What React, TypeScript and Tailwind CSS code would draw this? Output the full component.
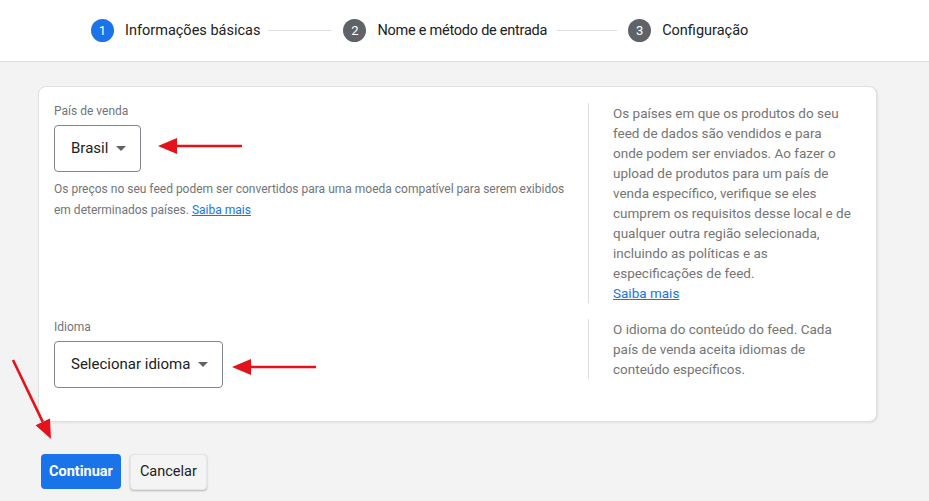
import React from 'react';

const font = { fontFamily: 'Roboto, "Noto Sans", Arial, sans-serif' };

function Step({ n, label, active, tight }: { n: number; label: string; active?: boolean; tight?: boolean }) {
  return (
    <div className="flex items-center gap-[11px]">
      <span
        className={
          'flex items-center justify-center w-[23px] h-[23px] rounded-full text-white text-[13px] ' +
          (active ? 'bg-[#1a73e8]' : 'bg-[#5f6368]')
        }
      >
        {n}
      </span>
      <span className={'text-[14.5px] text-[#202124] ' + (tight ? 'tracking-[-0.25px]' : '')}>{label}</span>
    </div>
  );
}

function Caret() {
  return (
    <svg width="10" height="5" viewBox="0 0 10 5" className="ml-[8px]">
      <path d="M0 0h10L5 5z" fill="#5f6368" />
    </svg>
  );
}

function Select({ value }: { value: string }) {
  return (
    <div className="inline-flex items-center h-[47px] pl-[16px] pr-[14px] border border-[#80868b] rounded-[4px] text-[15px] text-[#202124]">
      {value}
      <Caret />
    </div>
  );
}

function Arrow({ x1, y1, x2, y2 }: { x1: number; y1: number; x2: number; y2: number }) {
  const a = Math.atan2(y2 - y1, x2 - x1);
  const len = 19, w = 8;
  const bx = x2 - len * Math.cos(a), by = y2 - len * Math.sin(a);
  const px = -Math.sin(a) * w, py = Math.cos(a) * w;
  return (
    <g>
      <line x1={x1} y1={y1} x2={bx} y2={by} stroke="#e3121b" strokeWidth="2.6" />
      <polygon points={`${x2},${y2} ${bx + px},${by + py} ${bx - px},${by - py}`} fill="#e3121b" />
    </g>
  );
}

const paisLines = [
  'Os países em que os produtos do seu',
  'feed de dados são vendidos e para',
  'onde podem ser enviados. Ao fazer o',
  'upload de produtos para um país de',
  'venda específico, verifique se eles',
  'cumprem os requisitos desse local e de',
  'qualquer outra região selecionada,',
  'incluindo as políticas e as',
  'especificações de feed.',
];

const idiomaLines = ['O idioma do conteúdo do feed. Cada', 'país de venda aceita idiomas de', 'conteúdo específicos.'];

export default function App() {
  return (
    <div className="relative w-[929px] h-[501px] bg-[#f3f3f3] overflow-hidden" style={font}>
      <div className="h-[62px] bg-white border-b border-[#dadce0] flex items-center pl-[91px]">
        <Step n={1} label="Informações básicas" active />
        <div className="w-[63px] h-px bg-[#dadce0] ml-[8px] mr-[12px]" />
        <Step n={2} label="Nome e método de entrada" tight />
        <div className="w-[60px] h-px bg-[#dadce0] ml-[10px] mr-[11px]" />
        <Step n={3} label="Configuração" />
      </div>

      <div className="mt-[24px] ml-[38px] w-[839px] bg-white border border-[#e0e0e0] rounded-[8px] shadow-[1px_1px_2px_rgba(0,0,0,0.08)] pt-[16px] pb-[33px] flex flex-col gap-[16px]">
        <div className="flex items-start">
          <div className="flex-1 pl-[15px] pr-[20px]">
            <div className="text-[12px] leading-[16px] text-[#70757a]">País de venda</div>
            <div className="mt-[6px]">
              <Select value="Brasil" />
            </div>
            <p className="mt-[7px] text-[12px] leading-[21px] text-[#70757a]">
              Os preços no seu feed podem ser convertidos para uma moeda compatível para serem exibidos em determinados países.{' '}
              <a className="text-[#1a73e8] underline">Saiba mais</a>
            </p>
          </div>
          <div className="w-[288px] border-l border-[#dadce0] pl-[24px] pr-[16px] text-[13.5px] leading-[20px] text-[#757575] whitespace-nowrap">
            {paisLines.map(l => (
              <div key={l}>{l}</div>
            ))}
            <a className="text-[#1a73e8] underline">Saiba mais</a>
          </div>
        </div>

        <div className="flex items-start">
          <div className="flex-1 pl-[15px] pr-[20px]">
            <div className="text-[12px] leading-[16px] text-[#70757a]">Idioma</div>
            <div className="mt-[6px]">
              <Select value="Selecionar idioma" />
            </div>
          </div>
          <div className="w-[288px] border-l border-[#dadce0] pl-[24px] pr-[16px] text-[13.5px] leading-[20px] text-[#757575] whitespace-nowrap">
            {idiomaLines.map(l => (
              <div key={l}>{l}</div>
            ))}
          </div>
        </div>
      </div>

      <div className="flex gap-[9px] mt-[32px] ml-[41px]">
        <button className="h-[35px] px-[8px] rounded-[4px] bg-[#1a73e8] text-white text-[14.5px] font-bold">Continuar</button>
        <button className="h-[36px] px-[9px] rounded-[4px] bg-[#f4f4f4] border border-[#e6e6e6] shadow-[0_1px_2px_rgba(0,0,0,0.25)] text-[#202124] text-[14.5px]">
          Cancelar
        </button>
      </div>

      <svg className="absolute inset-0 pointer-events-none" width="929" height="501">
        <Arrow x1={242} y1={146} x2={158} y2={146} />
        <Arrow x1={316} y1={367} x2={232} y2={367} />
        <Arrow x1={13} y1={360} x2={51} y2={439} />
      </svg>
    </div>
  );
}
